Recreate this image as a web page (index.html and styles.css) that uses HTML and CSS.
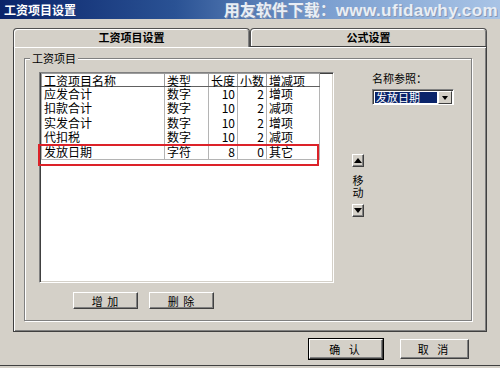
FILE: index.html
```html
<!DOCTYPE html>
<html lang="zh-CN">
<head>
<meta charset="utf-8">
<title>工资项目设置</title>
<link rel="stylesheet" href="styles.css">
</head>
<body>
<div class="window">
  <div class="titlebar">
    <span class="title">工资项目设置</span>
    <span class="watermark">用友软件下载：<span class="wm-latin">www.ufidawhy.com</span></span>
  </div>
  <div class="body">
    <div class="tabs">
      <div class="tab active">工资项目设置</div>
      <div class="tab">公式设置</div>
    </div>
    <div class="panel">
      <fieldset class="group">
        <legend class="group-title">工资项目</legend>
        <div class="group-inner">
          <div class="left-col">
            <div class="list">
              <table class="grid">
                <thead>
                  <tr>
                    <th class="c-name">工资项目名称</th>
                    <th class="c-type">类型</th>
                    <th class="c-len">长度</th>
                    <th class="c-dec">小数</th>
                    <th class="c-inc">增减项</th>
                  </tr>
                </thead>
                <tbody>
                  <tr><td>应发合计</td><td>数字</td><td class="num">10</td><td class="num">2</td><td>增项</td></tr>
                  <tr><td>扣款合计</td><td>数字</td><td class="num">10</td><td class="num">2</td><td>减项</td></tr>
                  <tr><td>实发合计</td><td>数字</td><td class="num">10</td><td class="num">2</td><td>增项</td></tr>
                  <tr><td>代扣税</td><td>数字</td><td class="num">10</td><td class="num">2</td><td>减项</td></tr>
                  <tr class="last"><td>发放日期</td><td>字符</td><td class="num">8</td><td class="num">0</td><td>其它</td></tr>
                </tbody>
              </table>
              <div class="highlight"></div>
            </div>
            <div class="list-buttons">
              <button class="btn small">增 加</button>
              <button class="btn small">删 除</button>
            </div>
          </div>
          <div class="mover">
            <button class="arrow-btn"><span class="tri up"></span></button>
            <div class="mover-label">移<br>动</div>
            <button class="arrow-btn"><span class="tri down"></span></button>
          </div>
          <div class="right-col">
            <div class="ref-label">名称参照：</div>
            <div class="select">
              <span class="select-value">发放日期</span>
              <span class="select-btn"><span class="tri down"></span></span>
            </div>
          </div>
        </div>
      </fieldset>
    </div>
    <div class="dialog-buttons">
      <button class="btn dlg default">确 认</button>
      <button class="btn dlg">取 消</button>
    </div>
  </div>
</div>
</body>
</html>
```
FILE: styles.css
```css
* { box-sizing: border-box; }
html, body { margin: 0; padding: 0; }
body {
  width: 500px;
  height: 368px;
  overflow: hidden;
  background: #d4d0c8;
  font-family: "Noto Sans CJK SC", "Liberation Sans", sans-serif;
  font-size: 12px;
  color: #000;
}
.window {
  height: 366px;
  border-bottom: 1px solid #404040;
}
.titlebar {
  height: 19px;
  display: flex;
  align-items: center;
  background: linear-gradient(90deg, #0a246a 0%, #2a5294 35%, #7b9fd0 65%, #a9c4e6 100%);
  padding: 0 2px 0 4px;
  overflow: hidden;
}
.title {
  color: #fff;
  font-weight: bold;
  font-size: 12px;
  line-height: 19px;
}
.watermark {
  margin-left: auto;
  color: #e9eef5;
  font-weight: bold;
  font-size: 16px;
  line-height: 19px;
  white-space: nowrap;
  text-shadow: 1px 1px 0 #8597b4;
}
.wm-latin {
  font-family: "Liberation Sans", sans-serif;
  font-size: 17px;
  letter-spacing: 0.4px;
}
.body {
  padding: 9px 13px 0;
}
.tabs {
  display: flex;
  height: 18px;
}
.tab {
  flex: 0 0 237px;
  height: 18px;
  border: 1px solid #505050;
  border-bottom: none;
  border-radius: 4px 4px 0 0;
  box-shadow: inset 1px 1px 0 #fff, inset -1px 0 0 #808080;
  text-align: center;
  font-size: 11px;
  font-weight: bold;
  line-height: 17px;
  background: #d4d0c8;
}
.tab.active {
  position: relative;
  z-index: 1;
  height: 19px;
  margin-bottom: -1px;
}
.panel {
  height: 286px;
  border: 1px solid #404040;
  box-shadow: inset 1px 1px 0 #fff, inset -1px -1px 0 #808080;
  padding: 4px 14px 0 10px;
}
.group {
  margin: 0;
  padding: 0;
  min-width: 0;
  height: 270px;
  border: 1px solid #808080;
  box-shadow: inset 1px 1px 0 #fff, 1px 1px 0 #fff;
}
.group-title {
  margin-left: 5px;
  padding: 0 2px;
  font-size: 11px;
  line-height: 14px;
  background: #d4d0c8;
}
.group-inner {
  display: flex;
  padding: 7px 0 0 14px;
}
.left-col {
  width: 295px;
}
.list {
  position: relative;
  height: 211px;
  background: #fff;
  border: 1px solid;
  border-color: #808080 #fff #fff #808080;
  box-shadow: inset 1px 1px 0 #404040, inset -1px -1px 0 #d4d0c8;
  padding: 0 0 0 1px;
}
.grid {
  border-collapse: collapse;
  table-layout: fixed;
  font-size: 12px;
}
.grid th {
  height: 13px;
  font-weight: normal;
  text-align: left;
  padding: 0 2px;
  line-height: 11px;
  border: 1px solid #9c9c9c;
  border-bottom-color: #606060;
  white-space: nowrap;
  vertical-align: middle;
}
.grid td {
  height: 14.5px;
  line-height: 12px;
  padding: 0 2px;
  border-left: 1px solid #b4b4b4;
  border-right: 1px solid #b4b4b4;
  white-space: nowrap;
  vertical-align: middle;
}
.grid tr.last td {
  border-bottom: 1px solid #b4b4b4;
}
.grid td.num {
  text-align: right;
}
.c-name { width: 123px; }
.c-type { width: 44px; }
.c-len { width: 29px; }
.c-dec { width: 29px; }
.c-inc { width: 53px; }
.highlight {
  position: absolute;
  left: -2px;
  top: 71px;
  width: 281px;
  height: 22px;
  border: 2px solid #dc2229;
}
.list-buttons {
  display: flex;
  gap: 11px;
  margin-top: 9px;
  padding-left: 34px;
}
.btn {
  font-family: "Noto Sans CJK SC", sans-serif;
  font-size: 11px;
  color: #000;
  background: #d4d0c8;
  border: 1px solid;
  border-color: #fff #404040 #404040 #fff;
  box-shadow: inset -1px -1px 0 #808080;
  padding: 0;
  letter-spacing: 1px;
}
.btn.small {
  width: 65px;
  height: 17px;
  line-height: 14px;
}
.mover {
  display: flex;
  flex-direction: column;
  align-items: center;
  width: 12px;
  margin-left: 18px;
  padding-top: 82px;
}
.arrow-btn {
  width: 12px;
  height: 13px;
  padding: 0;
  background: #d4d0c8;
  border: 1px solid;
  border-color: #fff #404040 #404040 #fff;
  box-shadow: inset -1px -1px 0 #808080;
  display: flex;
  align-items: center;
  justify-content: center;
}
.tri {
  display: block;
  width: 0;
  height: 0;
  border-left: 4px solid transparent;
  border-right: 4px solid transparent;
}
.tri.up { border-bottom: 5px solid #000; }
.tri.down { border-top: 5px solid #000; }
.mover-label {
  font-size: 11px;
  line-height: 11.5px;
  margin: 8px 0 6px;
  text-align: center;
}
.right-col {
  margin-left: 8px;
}
.ref-label {
  font-size: 11px;
  line-height: 12px;
}
.select {
  display: flex;
  margin-top: 5px;
  width: 82px;
  height: 16px;
  background: #fff;
  border: 1px solid;
  border-color: #808080 #fff #fff #808080;
  box-shadow: inset 1px 1px 0 #404040;
  padding: 2px 1px 1px 2px;
}
.select-value {
  flex: 1;
  background: #0a246a;
  color: #fff;
  font-size: 11px;
  line-height: 11px;
  padding-left: 1px;
  margin-right: 1px;
}
.select-btn {
  width: 14px;
  margin-top: -1px;
  margin-bottom: -1px;
  background: #d4d0c8;
  border: 1px solid;
  border-color: #fff #404040 #404040 #fff;
  display: flex;
  align-items: center;
  justify-content: center;
}
.select-btn .tri {
  border-left-width: 3px;
  border-right-width: 3px;
  border-top-width: 4px;
}
.dialog-buttons {
  display: flex;
  justify-content: flex-end;
  gap: 17px;
  margin-top: 7px;
  padding-right: 18px;
}
.btn.dlg {
  width: 69px;
  height: 20px;
  line-height: 17px;
  letter-spacing: 3px;
}
.btn.dlg.default {
  width: 74px;
  outline: 1px solid #000;
  outline-offset: 0;
  border-color: #fff #404040 #404040 #fff;
}
```
